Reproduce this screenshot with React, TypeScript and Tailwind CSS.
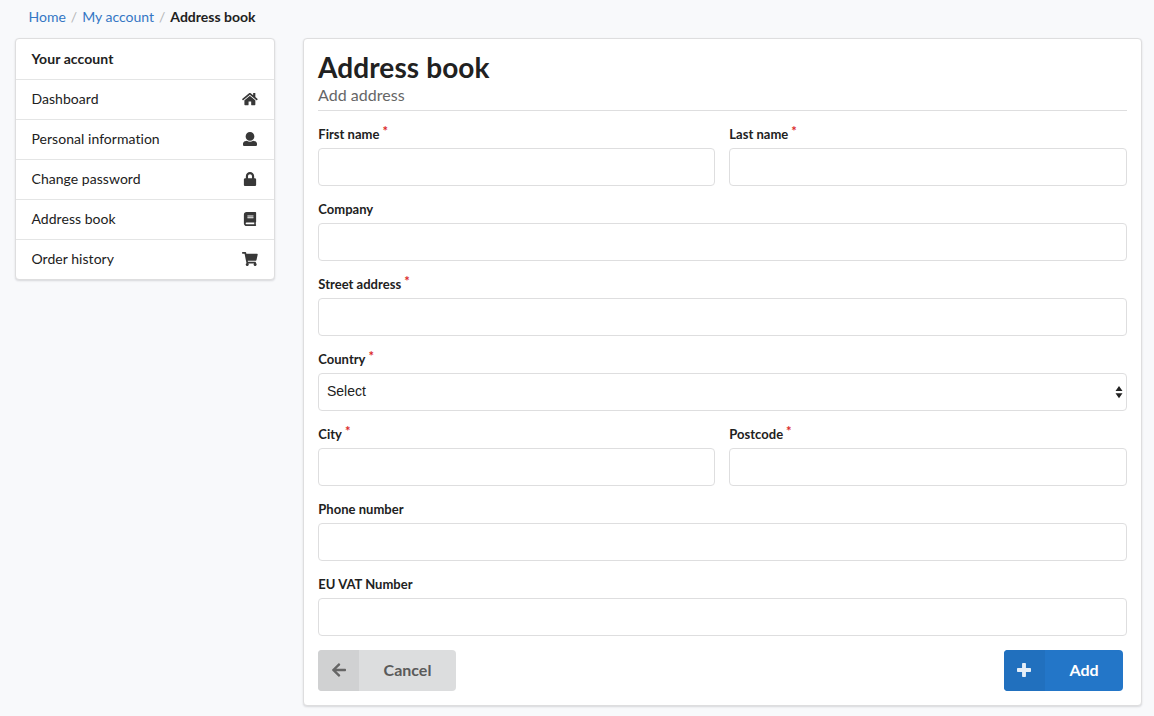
import type { ReactNode } from 'react';
import { FaLock, FaBook, FaShoppingCart, FaArrowLeft } from 'react-icons/fa';

const card = 'rounded border border-[#dededf] bg-white shadow-[0_1px_2px_0_rgba(34,36,38,0.15)]';
const control = 'block h-[38px] w-full rounded border border-[#dededf] bg-white px-2 text-sm outline-none';
const glyph = 'h-[14px] w-auto shrink-0';

function HomeIcon() {
  return (
    <svg className={glyph} viewBox="0 0 576 512" fill="currentColor">
      <path d="M488 312.7V456c0 13.3-10.7 24-24 24H348c-6.6 0-12-5.4-12-12V356c0-6.6-5.4-12-12-12h-72c-6.6 0-12 5.4-12 12v112c0 6.6-5.4 12-12 12H112c-13.3 0-24-10.7-24-24V312.7c0-3.6 1.6-7 4.4-9.3l188-154.8c4.4-3.6 10.8-3.6 15.3 0l188 154.8c2.7 2.3 4.3 5.7 4.3 9.3zm83.6-60.9L488 182.9V44.4c0-6.6-5.4-12-12-12h-56c-6.6 0-12 5.4-12 12V117l-89.5-73.7c-17.7-14.6-43.3-14.6-61 0L4.4 251.8c-5.1 4.2-5.8 11.8-1.6 16.9l25.5 31c4.2 5.1 11.8 5.8 16.9 1.6l235.2-193.7c4.4-3.6 10.8-3.6 15.3 0l235.2 193.7c5.1 4.2 12.7 3.5 16.9-1.6l25.5-31c4.2-5.2 3.4-12.7-1.7-16.9z" />
    </svg>
  );
}

function UserIcon() {
  return (
    <svg className={glyph} viewBox="0 0 512 512" fill="currentColor">
      <path d="M256 0c88.366 0 160 71.634 160 160s-71.634 160-160 160S96 248.366 96 160 167.634 0 256 0zm183.283 333.821l-71.313-17.828c-74.923 53.89-165.738 41.864-223.94 0l-71.313 17.828C29.981 344.505 0 382.903 0 426.955V464c0 26.51 21.49 48 48 48h416c26.51 0 48-21.49 48-48v-37.045c0-44.052-29.981-82.45-72.717-93.134z" />
    </svg>
  );
}

function PlusIcon() {
  return (
    <svg className="h-4 w-auto" viewBox="0 0 448 512" fill="currentColor">
      <path d="M448 294.2v-76.4c0-13.3-10.7-24-24-24H286.2V56c0-13.3-10.7-24-24-24h-76.4c-13.3 0-24 10.7-24 24v137.8H24c-13.3 0-24 10.7-24 24v76.4c0 13.3 10.7 24 24 24h137.8V456c0 13.3 10.7 24 24 24h76.4c13.3 0 24-10.7 24-24V318.2H424c13.3 0 24-10.7 24-24z" />
    </svg>
  );
}

const menu: { label: string; icon: ReactNode }[] = [
  { label: 'Dashboard', icon: <HomeIcon /> },
  { label: 'Personal information', icon: <UserIcon /> },
  { label: 'Change password', icon: <FaLock className={glyph} /> },
  { label: 'Address book', icon: <FaBook className={glyph} /> },
  { label: 'Order history', icon: <FaShoppingCart className="h-[14px] w-[15.75px] shrink-0" /> },
];

function Label({ text, required }: { text: string; required?: boolean }) {
  return (
    <span className="flex h-[22px] whitespace-nowrap pl-[0.3px] text-[13px] font-bold leading-4 tracking-[0.02px]">
      {text}
      {required && <span className="-mt-[3px] ml-[3px] text-[#db2828]">*</span>}
    </span>
  );
}

function Field({ text, required }: { text: string; required?: boolean }) {
  return (
    <label className="block">
      <Label text={text} required={required} />
      <input type="text" className={control} />
    </label>
  );
}

function CountryField() {
  return (
    <label className="block">
      <Label text="Country" required />
      <span className={`${control} !flex items-center justify-between !pr-[3px]`}>
        <span className="-mt-[2px] font-['Liberation_Sans',Arial,sans-serif] text-[14px] leading-5">Select</span>
        <svg width="8" height="14" viewBox="0 0 8 14" fill="#222">
          <path d="M4 1 7.5 6H0.5ZM4 13.2 0.5 8.2H7.5Z" />
        </svg>
      </span>
    </label>
  );
}

export default function App() {
  return (
    <div className="h-[716px] w-[1154px] overflow-hidden bg-[#f8f9fb] font-[Lato,sans-serif] text-sm text-[#212121]">
      <nav className="flex h-[38px] items-start pl-[28.5px] pt-[7px] leading-5">
        <a className="text-[#3476c4]">Home</a>
        <span className="mx-[5px] text-[#b5b6b7]">/</span>
        <a className="text-[#3476c4]">My account</a>
        <span className="mx-[5px] text-[#b5b6b7]">/</span>
        <span className="font-bold">Address book</span>
      </nav>
      <div className="flex items-start gap-7 pl-[15px]">
        <aside className={`w-[260px] ${card}`}>
          <div className="flex h-10 items-center pl-[15.5px] font-bold tracking-[0.08px]">Your account</div>
          {menu.map((item) => (
            <a
              key={item.label}
              className="flex h-10 items-center justify-between border-t border-[#e4e5e5] pl-[15.5px] pr-4 tracking-[0.04px]"
            >
              <span className="pb-[2px]">{item.label}</span>
              <span className="flex w-4 justify-center pb-px text-[#383838]">{item.icon}</span>
            </a>
          ))}
        </aside>
        <main className={`h-[668px] w-[839px] px-[14px] pt-[10px] ${card}`}>
          <h1 className="text-[28px] font-bold leading-9 tracking-[0.1px]">Address book</h1>
          <p className="h-[26px] border-b border-[#dededf] text-base leading-5 tracking-[0.04px] text-[#666]">Add address</p>
          <form className="flex flex-col gap-[15px] pt-[15px]">
            <div className="grid grid-cols-[397px_398px] gap-[14px]">
              <Field text="First name" required />
              <Field text="Last name" required />
            </div>
            <Field text="Company" />
            <Field text="Street address" required />
            <CountryField />
            <div className="grid grid-cols-[397px_398px] gap-[14px]">
              <Field text="City" required />
              <Field text="Postcode" required />
            </div>
            <Field text="Phone number" />
            <Field text="EU VAT Number" />
          </form>
          <div className="flex justify-between pr-1 pt-[14px] text-base font-bold">
            <button type="button" className="flex h-[41px] w-[138px] overflow-hidden rounded bg-[#dcddde] text-[#5a5a5a]">
              <span className="flex h-full w-[41px] items-center justify-center bg-[#d0d1d2] pb-px text-[#666]">
                <FaArrowLeft />
              </span>
              <span className="flex h-full flex-1 items-center justify-center pb-[2px]">Cancel</span>
            </button>
            <button type="button" className="flex h-[41px] w-[119px] overflow-hidden rounded bg-[#2376c8] text-white">
              <span className="flex h-full w-[41px] items-center justify-center bg-[#2170be] pb-px pr-px text-[#e5eef8]">
                <PlusIcon />
              </span>
              <span className="flex h-full flex-1 items-center justify-center pb-[2px]">Add</span>
            </button>
          </div>
        </main>
      </div>
    </div>
  );
}
